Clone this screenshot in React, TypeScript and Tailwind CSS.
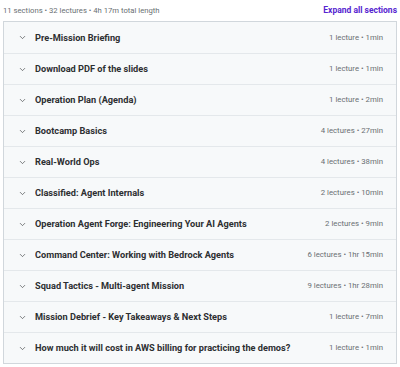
import { ChevronDown } from 'lucide-react'

interface Section {
  title: string
  meta: string
}

const SECTIONS: Section[] = [
  { title: 'Pre-Mission Briefing', meta: '1 lecture • 1min' },
  { title: 'Download PDF of the slides', meta: '1 lecture • 1min' },
  { title: 'Operation Plan (Agenda)', meta: '1 lecture • 2min' },
  { title: 'Bootcamp Basics', meta: '4 lectures • 27min' },
  { title: 'Real-World Ops', meta: '4 lectures • 38min' },
  { title: 'Classified: Agent Internals', meta: '2 lectures • 10min' },
  { title: 'Operation Agent Forge: Engineering Your AI Agents', meta: '2 lectures • 9min' },
  { title: 'Command Center: Working with Bedrock Agents', meta: '6 lectures • 1hr 15min' },
  { title: 'Squad Tactics - Multi-agent Mission', meta: '9 lectures • 1hr 28min' },
  { title: 'Mission Debrief - Key Takeaways & Next Steps', meta: '1 lecture • 7min' },
  { title: 'How much it will cost in AWS billing for practicing the demos?', meta: '1 lecture • 1min' },
]

function SectionRow({ section }: { section: Section }) {
  return (
    <div className="flex items-center h-[31px] pl-[14px] pr-[13px] bg-[#f7f9fa] border-t border-[#e4e8eb] first:border-t-0">
      <ChevronDown className="w-[9px] h-[9px] text-[#3e4143] mr-[8px]" strokeWidth={1.75} />
      <span className="flex-1 truncate text-[9.2px] font-bold text-[#2d2f31]">{section.title}</span>
      <span className="text-[7.8px] text-[#6a6f73] whitespace-nowrap">{section.meta}</span>
    </div>
  )
}

export default function App() {
  return (
    <div className="w-[400px] h-[367px] bg-white px-[3px] font-['Roboto',sans-serif]">
      <div className="flex items-center justify-between h-[21px]">
        <span className="text-[7.7px] text-[#6a6f73]">11 sections • 32 lectures • 4h 17m total length</span>
        <span className="text-[8.5px] font-bold text-[#5624d0]">Expand all sections</span>
      </div>
      <div className="border border-[#d1d7dc]">
        {SECTIONS.map((s) => (
          <SectionRow key={s.title} section={s} />
        ))}
      </div>
    </div>
  )
}
